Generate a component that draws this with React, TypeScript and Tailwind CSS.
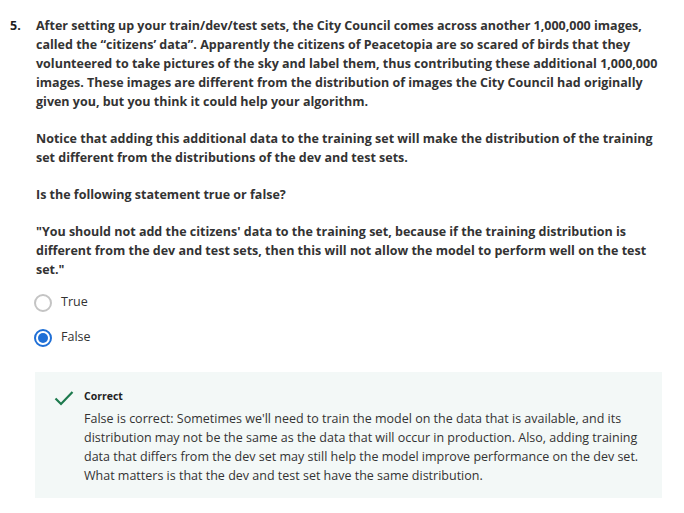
import React from "react";

export default function App() {
  return (
    <div className="w-[684px] h-[513px] bg-white text-[#1f1f1f]" style={{ fontFamily: '"Open Sans", sans-serif' }}>
      <div className="flex pt-[16px]">
        <div className="w-[36px] pl-[10px] text-[12.5px] font-bold leading-[19px] text-[#1f1f1f]">5.</div>
        <div className="w-[630px] text-[12.5px] font-bold leading-[19px] text-[#333]">
          <p>
            After setting up your train/dev/test sets, the City Council comes across another 1,000,000 images, called the “citizens’ data”. Apparently the citizens of Peacetopia are so scared of birds that they volunteered to take pictures of the sky and label them, thus contributing these additional 1,000,000 images. These images are different from the distribution of images the City Council had originally given you, but you think it could help your algorithm.
          </p>
          <p className="mt-[18px]">
            Notice that adding this additional data to the training set will make the distribution of the training set different from the distributions of the dev and test sets.
          </p>
          <p className="mt-[18px]">Is the following statement true or false?</p>
          <p className="mt-[18px]">
            "You should not add the citizens' data to the training set, because if the training distribution is different from the dev and test sets, then this will not allow the model to perform well on the test set."
          </p>
        </div>
      </div>
      <div className="ml-[34px] mt-[14px] flex flex-col gap-[16px] text-[12.5px] text-[#333]">
        <div className="flex items-center gap-[9px] h-[19px]">
          <span className="w-[18px] h-[18px] rounded-full border-2 border-[#c4c4c4] bg-white" />
          <span>True</span>
        </div>
        <div className="flex items-center gap-[9px] h-[19px]">
          <span className="w-[18px] h-[18px] rounded-full border-2 border-[#1f6fd6] bg-white flex items-center justify-center">
            <span className="w-[10px] h-[10px] rounded-full bg-[#1f6fd6]" />
          </span>
          <span>False</span>
        </div>
      </div>
      <div className="ml-[35px] mt-[25px] w-[627px] bg-[#f3f8f7] flex pt-[17px] pb-[13px]">
        <div className="w-[49px] flex justify-end pr-[10px] pt-[1px]">
          <svg width="20" height="16" viewBox="0 0 20 16">
            <path d="M1.5 8.5 L7 14 L18.5 2" fill="none" stroke="#1d7a4e" strokeWidth="2.2" />
          </svg>
        </div>
        <div className="flex-1 pr-[20px]">
          <div className="text-[10.5px] font-bold leading-[15px] text-[#1f1f1f]">Correct</div>
          <p className="mt-[5px] text-[12.5px] leading-[19px] text-[#333]">
            False is correct: Sometimes we'll need to train the model on the data that is available, and its distribution may not be the same as the data that will occur in production. Also, adding training data that differs from the dev set may still help the model improve performance on the dev set. What matters is that the dev and test set have the same distribution.
          </p>
        </div>
      </div>
    </div>
  );
}
